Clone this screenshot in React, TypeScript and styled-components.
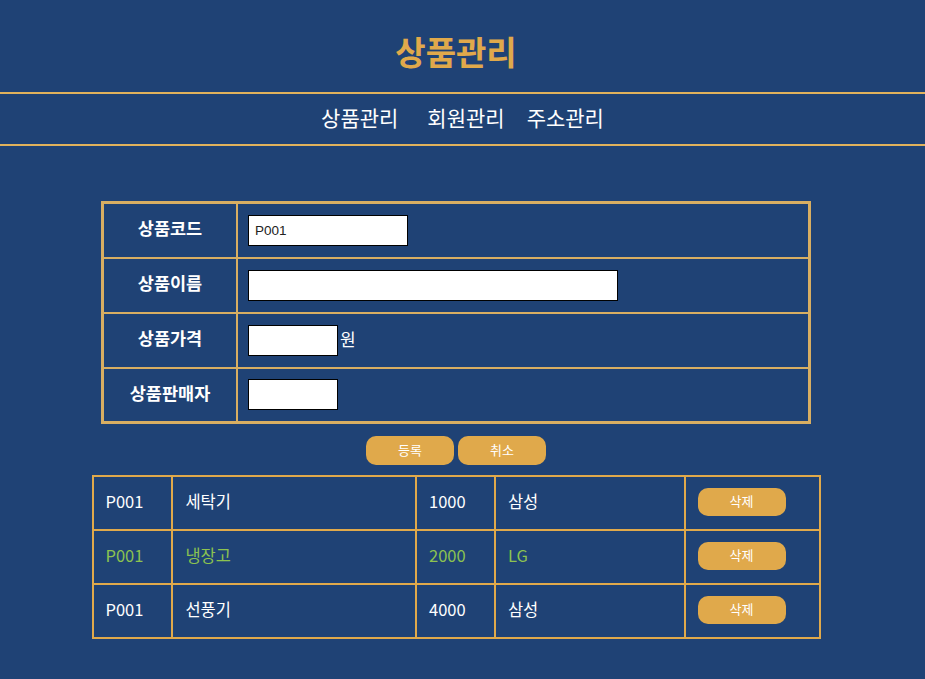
import React from "react";
import styled, { createGlobalStyle } from "styled-components";

const Global = createGlobalStyle`
  html, body { margin: 0; padding: 0; background: #1f4275; }
  body { font-family: "Noto Sans CJK KR", "Noto Sans", sans-serif; color: #fff; }
`;

const Page = styled.div`
  width: 912px;
  display: flex;
  flex-direction: column;
  align-items: center;
`;

const Title = styled.h1`
  margin: 0;
  height: 92px;
  width: 100%;
  display: flex;
  align-items: center;
  justify-content: center;
  padding-top: 10px;
  box-sizing: border-box;
  color: #e0a94b;
  font-size: 33px;
  font-weight: 700;
`;

const Nav = styled.nav`
  width: 925px;
  align-self: flex-start;
  border-top: 2px solid #e0b25c;
  border-bottom: 2px solid #e0b25c;
  height: 46px;
  display: flex;
  justify-content: center;
  align-items: center;
  padding-bottom: 4px;
  box-sizing: content-box;
`;

const NavItem = styled.span<{ $ml: number }>`
  font-size: 21px;
  color: #fff;
  margin-left: ${(p) => p.$ml}px;
`;

const FormTable = styled.table`
  margin-top: 55px;
  width: 710px;
  border-collapse: collapse;
  border: 3px solid #d8ae62;
`;

const Row = styled.tr`
  height: 55px;
`;

const LabelCell = styled.th`
  width: 132px;
  border: 2px solid #d8ae62;
  font-size: 17.5px;
  font-weight: 700;
  color: #fff;
  text-align: center;
  padding: 0 0 5px;
`;

const FieldCell = styled.td`
  border: 2px solid #d8ae62;
  padding: 0 0 0 10px;
  font-size: 17px;
`;

const FieldWrap = styled.div`
  display: flex;
  align-items: center;
`;

const Input = styled.input<{ $w: number }>`
  width: ${(p) => p.$w}px;
  height: 31px;
  box-sizing: border-box;
  border: 1px solid #000;
  background: #fff;
  font-family: "Liberation Sans", Arial, sans-serif;
  font-size: 13.5px;
  color: #222;
  padding: 0 0 0 6px;
  margin: 0;
  outline: none;
`;

const Unit = styled.span`
  color: #fff;
  font-size: 17px;
  margin-left: 2px;
  padding-bottom: 3px;
`;

const Buttons = styled.div`
  display: flex;
  gap: 4px;
  margin-top: 12px;
  margin-bottom: 10px;
`;

const Btn = styled.button`
  width: 88px;
  height: 29px;
  border: none;
  border-radius: 10px;
  background: #e0a94b;
  color: #fff;
  font-family: "Noto Sans CJK KR", sans-serif;
  font-size: 13px;
  padding: 0 0 3px;
  cursor: pointer;
`;

const ListTable = styled.table`
  width: 729px;
  border-collapse: collapse;
  border: 2px solid #e0a94b;
`;

const ListRow = styled.tr<{ $green?: boolean }>`
  height: 54px;
  color: ${(p) => (p.$green ? "#8cc350" : "#fff")};
`;

const Cell = styled.td<{ $w: number }>`
  width: ${(p) => p.$w}px;
  border: 2px solid #e0a94b;
  padding: 0 0 4px 12px;
  font-size: 16.5px;
  box-sizing: border-box;
`;

const DelBtn = styled(Btn)`
  height: 28px;
`;

const rows = [
  { code: "P001", name: "세탁기", price: "1000", seller: "삼성" },
  { code: "P001", name: "냉장고", price: "2000", seller: "LG", green: true },
  { code: "P001", name: "선풍기", price: "4000", seller: "삼성" },
];

export default function App() {
  return (
    <>
      <Global />
      <Page>
        <Title>상품관리</Title>
        <Nav>
          <NavItem $ml={0}>상품관리</NavItem>
          <NavItem $ml={29}>회원관리</NavItem>
          <NavItem $ml={22}>주소관리</NavItem>
        </Nav>
        <FormTable>
          <tbody>
            <Row>
              <LabelCell>상품코드</LabelCell>
              <FieldCell>
                <FieldWrap>
                  <Input $w={160} defaultValue="P001" />
                </FieldWrap>
              </FieldCell>
            </Row>
            <Row>
              <LabelCell>상품이름</LabelCell>
              <FieldCell>
                <FieldWrap>
                  <Input $w={370} />
                </FieldWrap>
              </FieldCell>
            </Row>
            <Row>
              <LabelCell>상품가격</LabelCell>
              <FieldCell>
                <FieldWrap>
                  <Input $w={90} />
                  <Unit>원</Unit>
                </FieldWrap>
              </FieldCell>
            </Row>
            <Row>
              <LabelCell>상품판매자</LabelCell>
              <FieldCell>
                <FieldWrap>
                  <Input $w={90} />
                </FieldWrap>
              </FieldCell>
            </Row>
          </tbody>
        </FormTable>
        <Buttons>
          <Btn>등록</Btn>
          <Btn>취소</Btn>
        </Buttons>
        <ListTable>
          <tbody>
            {rows.map((r, i) => (
              <ListRow key={i} $green={r.green}>
                <Cell $w={80}>{r.code}</Cell>
                <Cell $w={244}>{r.name}</Cell>
                <Cell $w={79}>{r.price}</Cell>
                <Cell $w={190}>{r.seller}</Cell>
                <Cell $w={135}>
                  <DelBtn>삭제</DelBtn>
                </Cell>
              </ListRow>
            ))}
          </tbody>
        </ListTable>
      </Page>
    </>
  );
}
